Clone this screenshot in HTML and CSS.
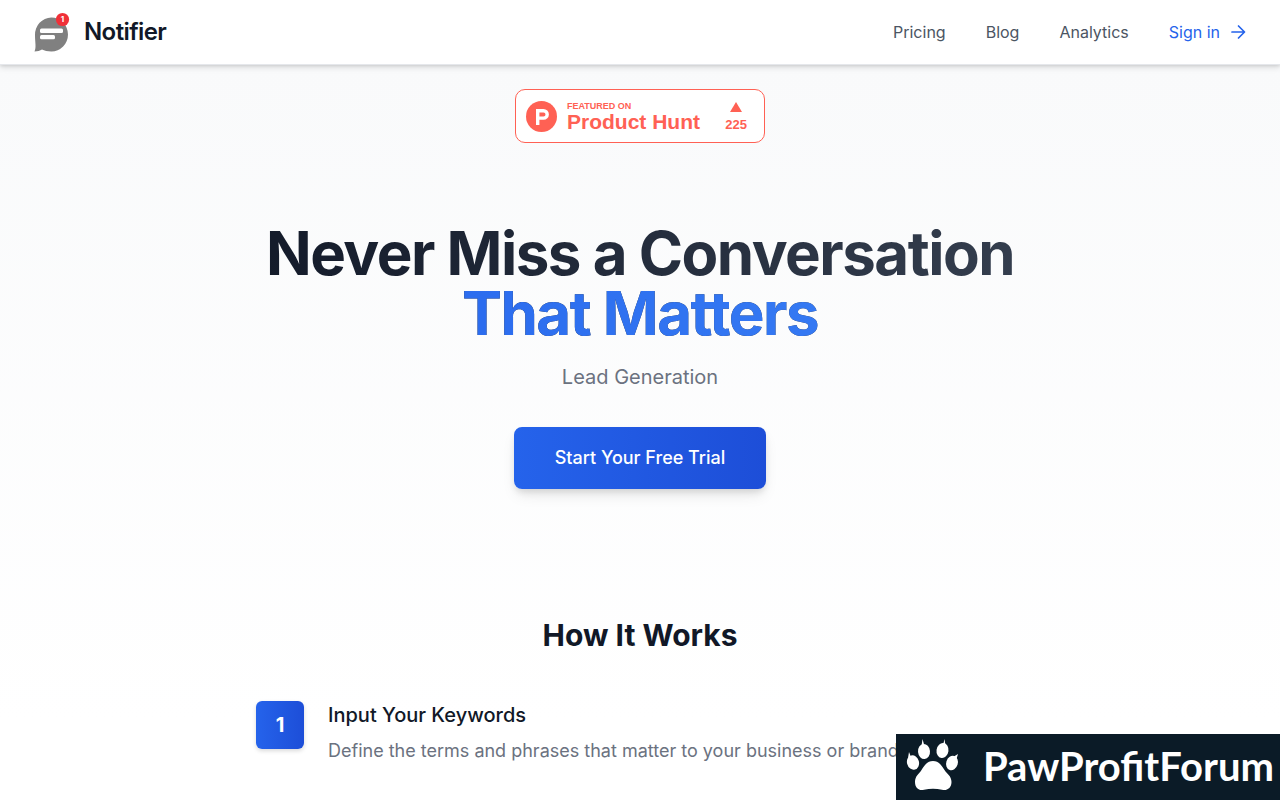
FILE: index.html
```
<!DOCTYPE html>
<html lang="en">

<head>
    <meta charset="utf-8">
    <title>Notifier</title>
    <meta name="viewport" content="width=device-width, initial-scale=1">
    <link rel="stylesheet" href="styles.css">
</head>

<body>
    <header class="header">
        <a href="#" class="brand">
            <svg class="brand-icon" width="40" height="40" viewBox="0 0 40 40" aria-hidden="true">
                <path fill="#808080" d="M2.500 39.500C4.500 35 3 31 3 23A16.500 17 0 1 1 19.300 39.500C15.500 39.500 12.500 38.500 10 37.500C8 38.500 5.500 39.500 2.500 39.500Z" />
                <rect x="8" y="16.500" width="23" height="4.500" rx="1.500" fill="#fff" />
                <rect x="8" y="23" width="15" height="4.200" rx="1.500" fill="#fff" />
                <circle cx="30.500" cy="7.500" r="6.600" fill="#f03038" />
                <text x="30.500" y="10" class="brand-count">1</text>
            </svg>
            <span class="brand-name">Notifier</span>
        </a>
        <nav class="nav">
            <a href="#">Pricing</a>
            <a href="#">Blog</a>
            <a href="#">Analytics</a>
            <a href="#" class="sign-in">Sign in
                <svg width="20" height="20" viewBox="0 0 20 20" fill="none" stroke="currentColor" stroke-width="1.700" stroke-linecap="round" stroke-linejoin="round" aria-hidden="true">
                    <path d="M4 10h12M10.500 4l6 6-6 6" />
                </svg>
            </a>
        </nav>
    </header>

    <main>
        <section class="hero">
            <a href="#" class="ph-badge">
                <svg width="31" height="31" viewBox="0 0 31 31" aria-hidden="true">
                    <circle cx="15.500" cy="15.500" r="15.500" fill="#ff6154" />
                    <path fill="#fff" fill-rule="evenodd" d="M10 8h7.500a5.400 5.400 0 0 1 0 10.800H13.400V24H10ZM13.400 11.400v4h4.100a2 2 0 0 0 0-4Z" />
                </svg>
                <span class="ph-text">
                    <span class="ph-small">FEATURED ON</span>
                    <span class="ph-name">Product Hunt</span>
                </span>
                <span class="ph-votes">
                    <svg width="12" height="10" viewBox="0 0 12 10" aria-hidden="true">
                        <path fill="#ff6154" d="M6 0l6 10H0z" />
                    </svg>
                    <span>225</span>
                </span>
            </a>
            <h1 class="title">Never Miss a Conversation <span class="title-accent">That Matters</span></h1>
            <p class="subtitle">Lead Generation</p>
            <button type="button" class="cta">Start Your Free Trial</button>
        </section>

        <section class="how">
            <h2>How It Works</h2>
            <div class="step">
                <div class="step-number">1</div>
                <div>
                    <h3>Input Your Keywords</h3>
                    <p>Define the terms and phrases that matter to your business or brand</p>
                </div>
            </div>
        </section>
    </main>

    <aside class="watermark">
        <svg width="54" height="54" viewBox="0 0 54 54" fill="#fff" aria-hidden="true">
            <ellipse cx="7" cy="23.500" rx="6" ry="7.300" transform="rotate(-15 7 23.500)" />
            <ellipse cx="18" cy="12.500" rx="6" ry="7.500" transform="rotate(-5 18 12.500)" />
            <ellipse cx="36.500" cy="11.500" rx="6" ry="7.500" transform="rotate(8 36.500 11.500)" />
            <ellipse cx="46" cy="24" rx="5.800" ry="7.300" transform="rotate(18 46 24)" />
            <path d="M2 19L3 13L5 18ZM15.500 7L16.500 0L18.500 7ZM37 6L38.500 0L39.500 7ZM47 18L52 15L50.500 20Z" />
            <path d="M27 22C33 22 36 27 38.500 31C41 35 45.500 37 45.500 43C45.500 49 41 52 36 50.800C30 49.300 24 49.300 18 50.800C13 52 9 49 9 43C9 37 13 35 15.500 31C18 27 21 22 27 22Z" />
        </svg>
        <span>PawProfitForum</span>
    </aside>
</body>

</html>
```
FILE: styles.css
```
* {
    box-sizing: border-box;
}

body {
    margin: 0;
    font-family: Inter, "Liberation Sans", sans-serif;
    font-size: 16px;
    line-height: 24px;
    color: #111827;
    background-color: white;
}

h1,
h2,
h3,
p {
    margin: 0;
}

a {
    color: inherit;
    text-decoration: none;
}

.header {
    position: relative;
    display: flex;
    align-items: center;
    justify-content: space-between;
    height: 65px;
    padding: 0 32px;
    background-color: white;
    border-bottom: 1px solid #e5e7eb;
    box-shadow: 0 1px 3px rgba(0, 0, 0, 0.1), 0 3px 6px rgba(0, 0, 0, 0.1);
}

.brand {
    display: flex;
    align-items: center;
    gap: 12px;
}

.brand-count {
    font-size: 8px;
    font-weight: 700;
    text-anchor: middle;
    fill: white;
}

.brand-name {
    font-size: 24px;
    font-weight: 600;
    line-height: 32px;
    letter-spacing: -0.025em;
}

.nav {
    display: flex;
    align-items: center;
    gap: 40px;
    color: #4b5563;
}

.sign-in {
    display: flex;
    align-items: center;
    gap: 8px;
    color: #2563eb;
}

main {
    background: linear-gradient(#f9fafb, white 86%);
}

.hero {
    display: flex;
    flex-direction: column;
    align-items: center;
    padding: 24px 32px 64px;
    text-align: center;
}

.ph-badge {
    display: flex;
    align-items: center;
    gap: 10px;
    width: 250px;
    height: 54px;
    padding: 0 10px;
    border: 1px solid #ff6154;
    border-radius: 10px;
    background-color: white;
    color: #ff6154;
    font-family: "Liberation Sans", Arial, sans-serif;
    font-weight: 700;
}

.ph-text {
    display: flex;
    flex-direction: column;
    padding-top: 2px;
    text-align: left;
}

.ph-small {
    font-size: 9px;
    line-height: 10px;
}

.ph-name {
    font-size: 21px;
    line-height: 22px;
}

.ph-votes {
    display: flex;
    flex-direction: column;
    align-items: center;
    gap: 4px;
    margin-left: auto;
    margin-right: 7px;
    padding-top: 4px;
    font-size: 13px;
    line-height: 18px;
}

.title {
    max-width: 896px;
    width: 100%;
    margin-top: 80px;
    font-size: 60px;
    font-weight: 700;
    line-height: 60px;
    letter-spacing: -0.025em;
    background: linear-gradient(to right, #111827, #374151);
    background-clip: text;
    -webkit-background-clip: text;
    color: transparent;
}

.title-accent {
    display: block;
    background: linear-gradient(to right, #2563eb, #3b82f6);
    background-clip: text;
    -webkit-background-clip: text;
}

.subtitle {
    margin-top: 20px;
    font-size: 20px;
    line-height: 28px;
    color: #6b7280;
}

.cta {
    margin-top: 36px;
    padding: 16px 41px;
    border: none;
    border-radius: 8px;
    background: linear-gradient(to right, #2563eb, #1d4ed8);
    box-shadow: 0 4px 6px -1px rgba(0, 0, 0, 0.1), 0 8px 15px -3px rgba(0, 0, 0, 0.1);
    color: white;
    font-family: inherit;
    font-size: 18px;
    font-weight: 500;
    line-height: 30px;
    cursor: pointer;
}

.how {
    max-width: 832px;
    margin: 0 auto;
    padding: 64px 32px;
}

.how h2 {
    margin-bottom: 48px;
    font-size: 30px;
    line-height: 36px;
    text-align: center;
}

.step {
    display: flex;
    gap: 24px;
}

.step-number {
    display: flex;
    align-items: center;
    justify-content: center;
    flex-shrink: 0;
    width: 48px;
    height: 48px;
    border-radius: 6px;
    background: linear-gradient(to right, #2563eb, #1d4ed8);
    box-shadow: 0 2px 4px rgba(0, 0, 0, 0.15);
    color: white;
    font-size: 20px;
    font-weight: 700;
}

.step h3 {
    margin-bottom: 8px;
    font-size: 20px;
    font-weight: 500;
    line-height: 28px;
}

.step p {
    font-size: 18px;
    line-height: 28px;
    color: #6b7280;
}

/* stays in the corner over the page */
.watermark {
    position: fixed;
    right: 0;
    bottom: 0;
    display: flex;
    align-items: center;
    justify-content: space-between;
    width: 384px;
    height: 66px;
    padding: 0 6px 2px 10px;
    background-color: #0b1b27;
    color: white;
    font-family: Lato, "Liberation Sans", sans-serif;
    font-size: 40px;
    font-weight: 700;
    line-height: 48px;
}
```
